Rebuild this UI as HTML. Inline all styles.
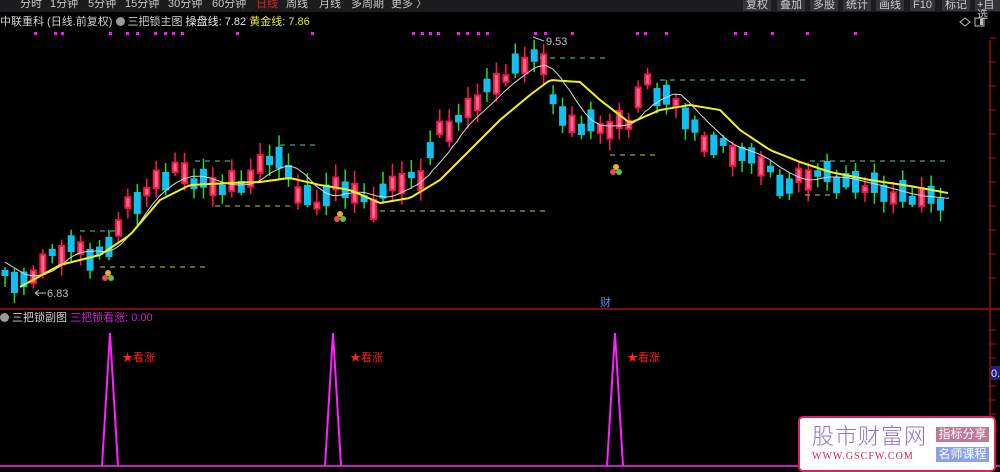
<!DOCTYPE html>
<html><head><meta charset="utf-8"><style>
*{margin:0;padding:0}
body{width:1000px;height:472px;background:#000;overflow:hidden;font-family:"Liberation Sans","Noto Sans CJK SC",sans-serif;position:relative}
.bar{position:absolute;left:0;top:0;width:1000px;height:12px;background:#1c1c1e;font-size:11px;color:#c8c8c8;line-height:11px;white-space:nowrap}
.bar span{position:absolute;top:-1px}
.btn{position:absolute;top:0;height:11px;background:#333437;color:#ccc;font-size:11px;line-height:10px;padding:0 3px}
.t{position:absolute;font-size:11px;white-space:nowrap;line-height:12px}
</style></head><body>
<div class="bar">
<span style="left:20px">分时</span><span style="left:50px">1分钟</span><span style="left:88px">5分钟</span><span style="left:125px">15分钟</span><span style="left:168px">30分钟</span><span style="left:212px">60分钟</span><span style="left:256px;color:#e02020">日线</span><span style="left:286px">周线</span><span style="left:319px">月线</span><span style="left:351px">多周期</span><span style="left:391px">更多 〉</span>
</div>
<div class="btn" style="left:743px">复权</div><div class="btn" style="left:777px">叠加</div><div class="btn" style="left:810px">多股</div><div class="btn" style="left:843px">统计</div><div class="btn" style="left:876px">画线</div><div class="btn" style="left:910px">F10</div><div class="btn" style="left:942px">标记</div><div class="btn" style="left:975px;padding:0 2px">+自选</div>
<div class="t" style="left:0;top:16px;color:#d0d0d0">中联重科 (日线.前复权) <span style="display:inline-block;width:9px;height:9px;border-radius:5px;background:#999;vertical-align:-1px"></span> 三把锁主图 <span style="color:#e8e8e8">操盘线: 7.82</span> <span style="color:#e8e830">黄金线: 7.86</span></div>
<div class="t" style="left:0;top:312px;color:#d0d0d0"><span style="display:inline-block;width:9px;height:9px;border-radius:5px;background:#999;vertical-align:-1px"></span> 三把锁副图 <span style="color:#d020d0">三把锁看涨: 0.00</span></div>
<svg id="s" width="1000" height="472" style="position:absolute;left:0;top:0"></svg>
<div style="position:absolute;left:798px;top:416px;width:194px;height:52px;background:#fff;border:2px solid #e0205a;border-radius:5px">
<div style="position:absolute;left:12px;top:4px;font-size:22px;color:#9070d0;letter-spacing:1px;font-family:'Noto Sans CJK SC',sans-serif;line-height:26px;font-weight:300">股市财富网</div>
<div style="position:absolute;left:12px;top:33px;font-size:10px;color:#d02050;font-family:'Liberation Serif',serif;letter-spacing:1px">WWW.GSCFW.COM</div>
<div style="position:absolute;left:136px;top:9px;width:53px;height:15px;background:#c07898;color:#fff;font-size:12px;line-height:15px;text-align:center">指标分享</div>
<div style="position:absolute;left:136px;top:29px;width:53px;height:15px;background:#8aa0e8;color:#fff;font-size:12px;line-height:15px;text-align:center">名师课程</div>
</div>
<script>
(function(){
var s=document.getElementById('s'),h='';
function L(x1,y1,x2,y2,c,w,d){h+='<line x1="'+x1+'" y1="'+y1+'" x2="'+x2+'" y2="'+y2+'" stroke="'+c+'" stroke-width="'+(w||1)+'"'+(d?' stroke-dasharray="'+d+'"':'')+'/>';}
function R(x,y,w,hh,c){h+='<rect x="'+x+'" y="'+y+'" width="'+w+'" height="'+hh+'" fill="'+c+'"/>';}
function T(x,y,t,c,fs){h+='<text x="'+x+'" y="'+y+'" fill="'+c+'" font-size="'+(fs||11)+'" font-family="Liberation Sans,Noto Sans CJK SC,sans-serif">'+t+'</text>';}
function interp(p,x){for(var i=1;i<p.length;i++){if(x<=p[i][0]){var a=p[i-1],b=p[i];return a[1]+(b[1]-a[1])*(x-a[0])/(b[0]-a[0]);}}return p[p.length-1][1];}
var cp=[[0,270],[25,285],[40,265],[70,245],[90,255],[105,255],[125,210],[160,180],[175,170],[200,182],[225,188],[250,180],[270,155],[285,165],[300,195],[315,205],[330,190],[345,185],[360,200],[375,205],[395,180],[420,180],[435,135],[460,120],[480,95],[500,80],[520,65],[535,55],[545,70],[555,100],[565,125],[590,125],[610,128],[630,120],[645,80],[660,95],[680,105],[700,140],[720,145],[740,155],[760,160],[780,185],[800,180],[820,172],[840,182],[870,185],[890,195],[920,197],[945,200]];
var ya=[[20,287],[60,265],[100,255],[130,235],[160,200],[190,185],[230,183],[260,182],[290,178],[320,185],[350,190],[380,203],[410,198],[440,180],[470,150],[500,120],[530,95],[550,80],[580,82],[600,100],[630,123],[660,110],[690,105],[720,110],[740,130],[770,150],[800,162],[830,172],[870,180],[910,186],[948,193]];
for(var i=0;i<100;i++){var x=5+i*9.45;var c=interp(cp,x)+Math.sin(i*2.3)*5;
var body=6+Math.abs(Math.sin(i*1.9))*16;
var up=(interp(cp,x+4)-interp(cp,x-5)<0);if(Math.sin(i*4.1)>0.55)up=!up;
var tp=c-body/2,bt=c+body/2;
var hi=tp-3-Math.abs(Math.sin(i*3.1))*9,lo=bt+2+Math.abs(Math.cos(i*2.7))*9;
if(up){L(x,hi,x,lo,'#ff1850',1.5);R(x-3.5,tp,7,bt-tp,'#f01848');R(x-1.5,tp+2,3,bt-tp-4,'#ff6a90');}
else{L(x,hi,x,lo,'#20e020',1.5);R(x-3.5,tp,7,bt-tp,'#10c0f0');}}
var p1='',p2='';for(var x=20;x<=948;x+=4){p1+=(x==20?'M':'L')+x+','+interp(ya,x).toFixed(1);}
for(var x=5;x<=950;x+=4){var v=0;for(var k=0;k<5;k++)v+=interp(cp,x-k*9);p2+=(x==5?'M':'L')+x+','+(v/5).toFixed(1);}
h+='<path d="'+p2+'" stroke="#d8d8d8" stroke-width="1" fill="none"/>';
h+='<path d="'+p1+'" stroke="#f0f020" stroke-width="2" fill="none"/>';
[[80,115,231],[195,235,161],[280,320,145],[540,610,58],[660,805,80],[810,950,161]].forEach(function(a){L(a[0],a[2],a[1],a[2],'#40d0c0',1,'5,5');});
[[100,205,267],[215,290,206],[380,545,211],[610,660,155],[805,835,195]].forEach(function(a){L(a[0],a[2],a[1],a[2],'#c8c840',1,'5,5');});
[[108,276],[340,217],[616,170]].forEach(function(b){h+='<circle cx="'+b[0]+'" cy="'+(b[1]-3)+'" r="3" fill="#e0b030"/><circle cx="'+(b[0]-3)+'" cy="'+(b[1]+2)+'" r="3" fill="#e05050"/><circle cx="'+(b[0]+3)+'" cy="'+(b[1]+2)+'" r="3" fill="#60c040"/>';});
[35,55,62,110,127,137,155,165,173,182,237,312,413,422,430,438,458,467,478,487,535,545,572,637,645,666,735,745,772,807,855].forEach(function(x){R(x-1,32,3,3,'#ff10ff');});
T(546,45,'9.53','#c0c0c0',11);L(533,37,544,41,'#c0c0c0');
T(47,297,'6.83','#c0c0c0',11);L(35,293,46,293,'#c0c0c0');L(35,293,39,290,'#c0c0c0');L(35,293,39,296,'#c0c0c0');
T(600,306,'财','#5090ff',11);
L(990,40,990,472,'#c01010',1.2);L(0,309,1000,309,'#a01010',1.5);
for(var y=38;y<300;y+=24)L(990,y,996,y,'#c01010');for(var y=330;y<470;y+=14)L(990,y,996,y,'#c01010');
R(991,366,9,14,'#202080');T(991,377,'0.','#e0e0ff',11);
h+='<path d="M960,22 l5,-4 l5,4 l-5,4z" stroke="#bbb" fill="none"/><rect x="975" y="18" width="9" height="8" stroke="#bbb" fill="none"/><rect x="980" y="19" width="3" height="6" fill="#bbb"/>';
L(0,466,1000,466,'#c020c0',2);
[110,333,615].forEach(function(x){h+='<path d="M'+(x-8)+',466 L'+x+',333 L'+(x+8)+',466" stroke="#ff20ff" stroke-width="2" fill="none"/>';});
T(122,361,'★看涨','#ff2020',11);T(350,361,'★看涨','#ff2020',11);T(627,361,'★看涨','#ff2020',11);
s.innerHTML=h;
})();
</script>
</body></html>
